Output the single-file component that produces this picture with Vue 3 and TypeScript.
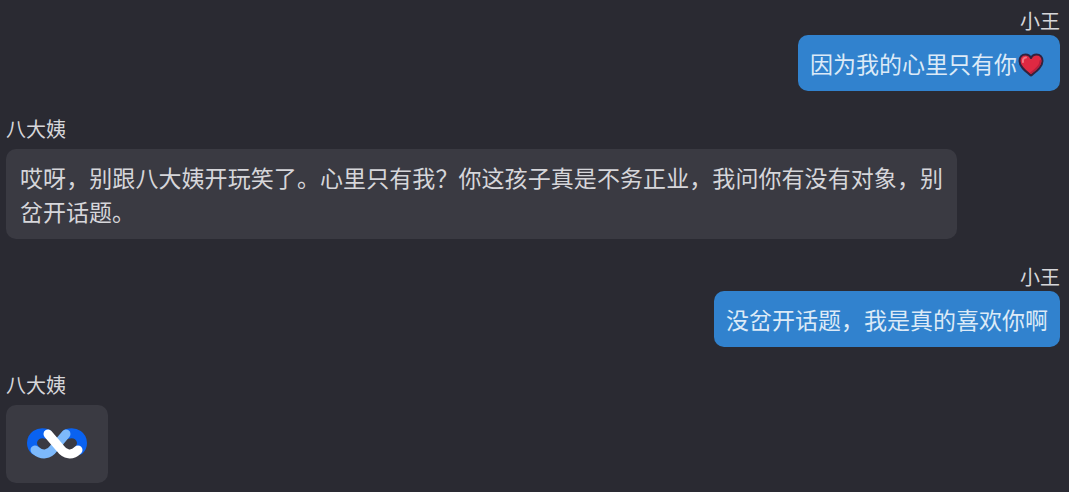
<script setup lang="ts">
interface Message {
  id: number
  sender: string
  mine: boolean
  text?: string
  heart?: boolean
  logo?: boolean
}

const messages: Message[] = [
  { id: 1, sender: '小王', mine: true, text: '因为我的心里只有你', heart: true },
  {
    id: 2,
    sender: '八大姨',
    mine: false,
    text: '哎呀，别跟八大姨开玩笑了。心里只有我？你这孩子真是不务正业，我问你有没有对象，别岔开话题。',
  },
  { id: 3, sender: '小王', mine: true, text: '没岔开话题，我是真的喜欢你啊' },
  { id: 4, sender: '八大姨', mine: false, logo: true },
]
</script>

<template>
  <main class="chat">
    <article v-for="m in messages" :key="m.id" class="message" :class="{ mine: m.mine }">
      <div class="sender">{{ m.sender }}</div>
      <div class="bubble" :class="{ pending: m.logo }">
        <svg v-if="m.logo" class="logo" viewBox="0 0 60 32" role="img" aria-label="八大姨">
          <g fill="none" stroke-linecap="round" stroke-linejoin="round">
            <path d="M20 6C11 3 5 9 5 15C5 18 6 20 8 22" stroke="#0a62f0" stroke-width="10" />
            <path d="M40 6C49 3 55 9 55 15C55 18 54 20 52 22" stroke="#0a62f0" stroke-width="10" />
            <path d="M39 6L27 20C22 27 15 28 8 22" stroke="#7db9fb" stroke-width="9" />
            <path d="M21 6L33 20C38 27 45 28 51 22" stroke="#fff" stroke-width="9" />
          </g>
        </svg>
        <p v-else class="text">{{ m.text }}<svg v-if="m.heart" class="heart" viewBox="0 0 26 24" role="img" aria-label="红心">
          <path d="M13 22.500C8 18.500 1.500 14 1.500 8C1.500 4 4 1.500 7.500 1.500C10 1.500 12 2.800 13 5C14 2.800 16 1.500 18.500 1.500C22 1.500 24.500 4 24.500 8C24.500 14 18 18.500 13 22.500Z" fill="#df2942" stroke="#32233f" stroke-width="2" stroke-linejoin="round" />
          <path d="M5 9C4.500 6 6 4.500 8 4.500" fill="none" stroke="#f27482" stroke-width="2" stroke-linecap="round" />
          <path d="M22.500 8C22.500 13 18 16.500 13 20" fill="none" stroke="#b91f3c" stroke-width="2" stroke-linecap="round" />
        </svg></p>
      </div>
    </article>
  </main>
</template>

<style>
body {
  margin: 0;
  background: #2a2a32;
}
</style>

<style scoped>
.chat {
  display: flex;
  flex-direction: column;
  gap: 24px;
  box-sizing: border-box;
  min-height: 100vh;
  padding: 7px 9px 8px 6px;
  background: #2a2a32;
  color: #d6d6da;
  font-family: "Noto Sans CJK SC", sans-serif;
}

.message {
  display: flex;
  flex-direction: column;
  align-items: flex-start;
  gap: 6px;
}

.message.mine {
  align-items: flex-end;
  gap: 0;
}

.sender {
  font-size: 20px;
  line-height: 28px;
}

.bubble {
  box-sizing: border-box;
  max-width: calc(100% - 103px);
  padding: 11px 14px;
  border-radius: 10px;
  background: #3a3a42;
}

.mine .bubble {
  padding: 11px 12px;
  background: #3182ce;
  color: #dceaf7;
}

.bubble.pending {
  padding: 23px 21px;
}

.text {
  margin: 0;
  font-size: 23px;
  line-height: 34px;
  text-align: justify;
}

.heart {
  width: 26px;
  height: 24px;
  margin: 0 4px 0 1px;
  vertical-align: -4px;
}

.logo {
  display: block;
  width: 60px;
  height: 32px;
}
</style>
